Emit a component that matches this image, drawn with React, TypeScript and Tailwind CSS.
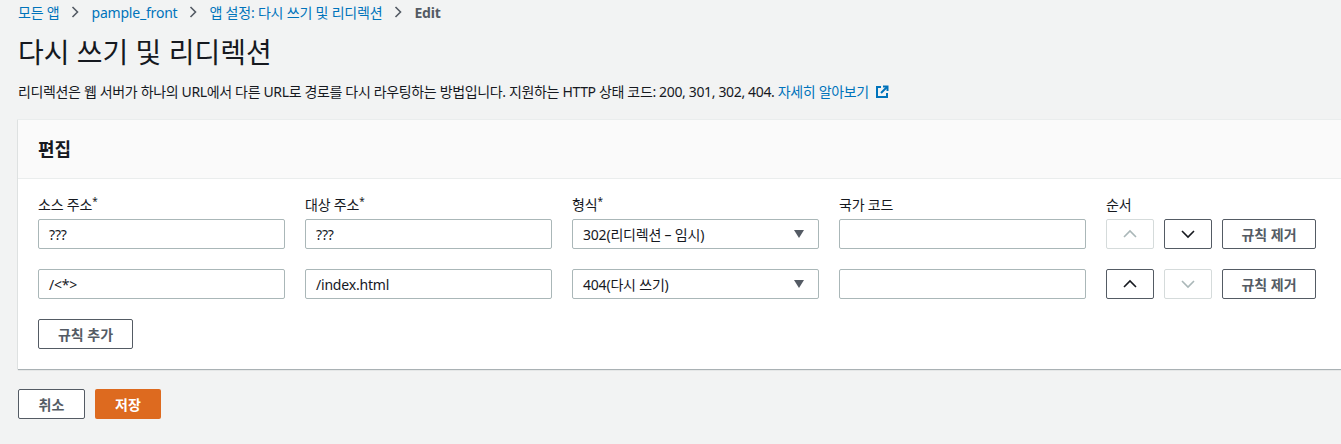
import React from "react";

const FONT = { fontFamily: '"Noto Sans", "Noto Sans CJK KR", sans-serif' };

function Chevron({ dir, disabled }: { dir: "up" | "down"; disabled?: boolean }) {
  return (
    <svg width="16" height="16" viewBox="0 0 16 16" fill="none">
      <path
        d={dir === "up" ? "M2 11 L8 5 L14 11" : "M2 5 L8 11 L14 5"}
        stroke={disabled ? "#aab7b8" : "#16191f"}
        strokeWidth="1.6"
      />
    </svg>
  );
}

function TextInput({ value }: { value: string }) {
  return (
    <div className="flex h-[30px] w-[247px] items-center rounded-[2px] border border-[#aab7b8] bg-white px-[10px] text-[14px] tracking-[-0.2px] text-[#16191f]">
      {value}
    </div>
  );
}

function Select({ value }: { value: string }) {
  return (
    <div className="flex h-[30px] w-[247px] items-center justify-between rounded-[2px] border border-[#aab7b8] bg-white pl-[10px] pr-[14px] text-[14px] tracking-[-0.2px] text-[#16191f]">
      <span>{value}</span>
      <svg width="10" height="8" viewBox="0 0 10 8">
        <path d="M0 0 H10 L5 8 Z" fill="#545b64" />
      </svg>
    </div>
  );
}

function OrderButton({ dir, disabled }: { dir: "up" | "down"; disabled?: boolean }) {
  return (
    <button
      className={`flex h-[30px] w-[48px] items-center justify-center rounded-[2px] border bg-white ${
        disabled ? "border-[#d5dbdb]" : "border-[#545b64]"
      }`}
    >
      <Chevron dir={dir} disabled={disabled} />
    </button>
  );
}

function Btn({ children, className = "" }: { children: React.ReactNode; className?: string }) {
  return (
    <button
      className={`flex h-[30px] items-center justify-center rounded-[2px] border border-[#545b64] bg-white text-[14px] font-bold text-[#545b64] ${className}`}
    >
      {children}
    </button>
  );
}

const rules = [
  { src: "???", dst: "???", type: "302(리디렉션 – 임시)", upDisabled: true, downDisabled: false },
  { src: "/<*>", dst: "/index.html", type: "404(다시 쓰기)", upDisabled: false, downDisabled: true },
];

export default function App() {
  return (
    <div className="min-h-[444px] bg-[#f2f3f3] pl-[18px] text-[#16191f]" style={FONT}>
      <nav className="flex h-[24px] items-center gap-[10px] text-[14px] tracking-[-0.2px]">
        <a className="text-[#0073bb]">모든 앱</a>
        <Sep />
        <a className="text-[#0073bb]">pample_front</a>
        <Sep />
        <a className="text-[#0073bb]">앱 설정: 다시 쓰기 및 리디렉션</a>
        <Sep />
        <span className="font-bold text-[#545b64]">Edit</span>
      </nav>
      <h1 className="mt-[10px] text-[28px] leading-[36px] text-[#16191f]">다시 쓰기 및 리디렉션</h1>
      <p className="mt-[12px] flex items-center text-[14px] leading-[20px] tracking-[-0.35px] text-[#16191f]">
        리디렉션은 웹 서버가 하나의 URL에서 다른 URL로 경로를 다시 라우팅하는 방법입니다. 지원하는 HTTP 상태 코드: 200,
        301, 302, 404.&nbsp;
        <a className="flex items-center gap-[6px] text-[#0073bb]">
          자세히 알아보기
          <svg width="14" height="14" viewBox="0 0 14 14" fill="none">
            <path d="M6 2 H2 V12 H12 V8" stroke="#0073bb" strokeWidth="2" />
            <path d="M8 1.5 H12.5 V6" stroke="#0073bb" strokeWidth="2" />
            <path d="M12 2 L6 8" stroke="#0073bb" strokeWidth="2" />
          </svg>
        </a>
      </p>

      <section className="mt-[17px] border-t border-[#eaeded] bg-white shadow-[0_1px_1px_0_rgba(0,28,36,0.3),-1px_0_0_0_#eaeded]">
        <div className="flex h-[59px] items-center border-b border-[#eaeded] bg-[#fafafa] pl-[20px]">
          <h2 className="text-[18px] font-bold">편집</h2>
        </div>
        <div className="px-[20px] pb-[20px] pt-[15px]">
          <div className="flex gap-[20px] text-[14px] leading-[22px] tracking-[-0.2px]">
            <Label w="w-[247px]">
              소스 주소<sup className="text-[10px]">*</sup>
            </Label>
            <Label w="w-[247px]">
              대상 주소<sup className="text-[10px]">*</sup>
            </Label>
            <Label w="w-[247px]">
              형식<sup className="text-[10px]">*</sup>
            </Label>
            <Label w="w-[247px]">국가 코드</Label>
            <Label w="w-[116px]">순서</Label>
          </div>
          <div className="mt-[3px] flex flex-col gap-[20px]">
            {rules.map((r, i) => (
              <div key={i} className="flex gap-[20px]">
                <TextInput value={r.src} />
                <TextInput value={r.dst} />
                <Select value={r.type} />
                <TextInput value="" />
                <div className="flex gap-[10px]">
                  <OrderButton dir="up" disabled={r.upDisabled} />
                  <OrderButton dir="down" disabled={r.downDisabled} />
                  <Btn className="w-[94px]">규칙 제거</Btn>
                </div>
              </div>
            ))}
          </div>
          <Btn className="mt-[20px] w-[95px]">규칙 추가</Btn>
        </div>
      </section>

      <div className="mt-[20px] flex gap-[10px]">
        <Btn className="w-[67px]">취소</Btn>
        <button className="flex h-[30px] w-[66px] items-center justify-center rounded-[2px] bg-[#dd6a1f] text-[14px] font-bold text-white">
          저장
        </button>
      </div>
    </div>
  );
}

function Label({ w, children }: { w: string; children: React.ReactNode }) {
  return <div className={`${w} text-[#16191f]`}>{children}</div>;
}

function Sep() {
  return (
    <svg width="12" height="12" viewBox="0 0 12 12" fill="none">
      <path d="M3.5 1 L8.5 6 L3.5 11" stroke="#545b64" strokeWidth="1.6" />
    </svg>
  );
}
